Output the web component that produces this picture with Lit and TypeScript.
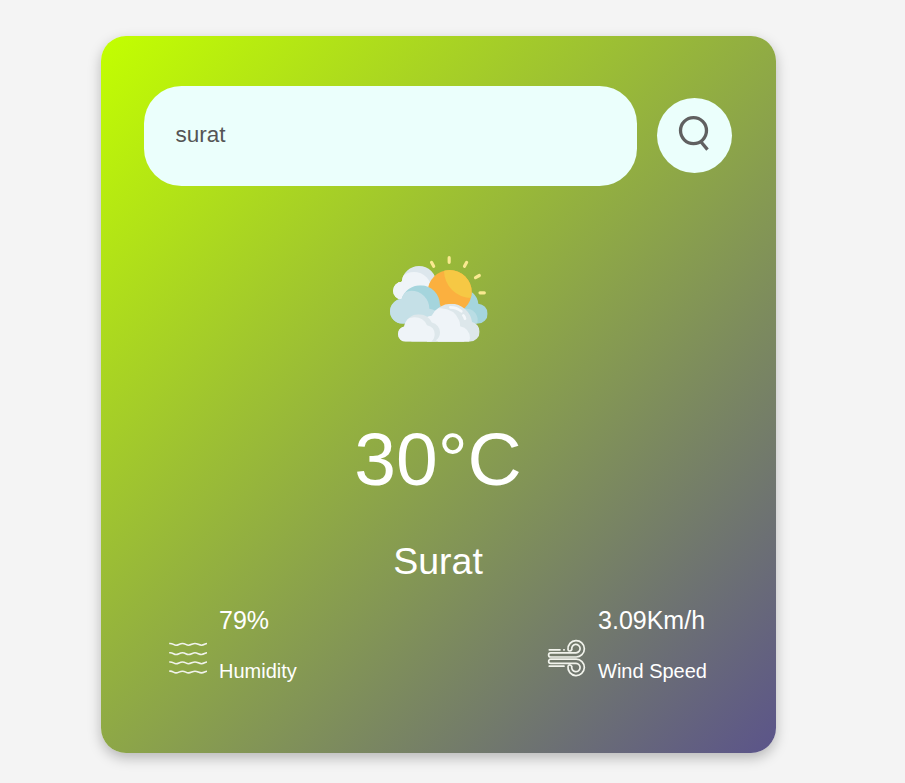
import { LitElement, html, css, svg } from "lit";
import { customElement, property } from "lit/decorators.js";

const cloudySun = svg`
  <defs>
    <clipPath id="sun"><circle cx="209" cy="141" r="66" /></clipPath>
    <clipPath id="back">
      <circle cx="117" cy="115" r="52" />
      <circle cx="66" cy="137" r="27" />
      <rect x="66" y="115" width="80" height="49" />
    </clipPath>
    <clipPath id="teal">
      <circle cx="121" cy="180" r="59" />
      <circle cx="67" cy="199" r="37" />
      <rect x="67" y="180" width="115" height="56" />
    </clipPath>
    <clipPath id="right">
      <circle cx="247" cy="180" r="48" />
      <circle cx="293" cy="206" r="30" />
      <rect x="240" y="185" width="53" height="51" />
    </clipPath>
    <clipPath id="front">
      <circle cx="213" cy="240" r="64" />
      <circle cx="269" cy="260" r="30" />
      <circle cx="158" cy="251" r="39" />
      <rect x="140" y="251" width="129" height="39" />
    </clipPath>
    <clipPath id="small">
      <circle cx="116" cy="252" r="44" />
      <circle cx="150" cy="262" r="30" />
      <circle cx="77" cy="267" r="23" />
      <rect x="77" y="265" width="92" height="25" />
    </clipPath>
    <clipPath id="base"><rect width="360" height="290" /></clipPath>
  </defs>
  <g stroke="#f9e990" stroke-width="9.500" stroke-linecap="round">
    <path d="M207.500 38V52M154.500 52L161 64M260 52L253.500 64M298 91.500L286.500 98M300 143.500H313" />
  </g>
  <g clip-path="url(#back)">
    <rect x="30" y="55" width="150" height="125" fill="#dde7ed" />
    <circle cx="102" cy="134" r="53" fill="#eff4f8" />
    <rect x="30" y="105" width="40" height="65" fill="#eff4f8" />
  </g>
  <g clip-path="url(#right)">
    <rect x="190" y="110" width="150" height="127" fill="#a5d5dd" />
    <circle cx="259" cy="225" r="34" fill="#b9dde4" />
  </g>
  <g clip-path="url(#sun)">
    <rect x="140" y="70" width="140" height="145" fill="#fbb03f" />
    <circle cx="275" cy="76" r="83" fill="#f6c844" />
  </g>
  <g clip-path="url(#teal)">
    <rect x="25" y="115" width="165" height="121" fill="#a5d5dd" />
    <path d="M20 236V155H58Q75 137 94 137A54 54 0 0 1 148 191Q169 193 180 210V236Z" fill="#c5e0e7" />
  </g>
  <g clip-path="url(#base)">
    <g clip-path="url(#front)">
      <rect x="115" y="170" width="190" height="125" fill="#dde7eb" />
      <path d="M110 295V190H182Q224 192 238 227Q241 237 240 244Q270 251 270 280L266 295Z" fill="#eff4f8" />
      <path d="M211 187Q230 187 244 199M250 211Q254 215 255 221" fill="none" stroke="#f4f8fb" stroke-width="8" stroke-linecap="round" />
    </g>
    <g clip-path="url(#small)">
      <rect x="50" y="195" width="135" height="95" fill="#dde7eb" />
      <path d="M50 290V226H76Q88 217 102 217A41 41 0 0 1 141 241Q164 246 164 268Q164 282 154 290Z" fill="#eff4f8" />
    </g>
  </g>`;

@customElement("weather-detail")
export class WeatherDetail extends LitElement {
  @property() kind = "humidity";
  @property() value = "";
  @property() label = "";

  static styles = css`
    :host { display: flex; align-items: center; gap: 11px; color: #fff; }
    .icon { width: 39px; height: 39px; margin-top: 28px; flex: none; fill: none; stroke: #f1f3ec; overflow: visible; }
    .value { font-size: 25px; line-height: 29px; }
    .label { font-size: 20px; line-height: 23px; margin-top: 25px; white-space: nowrap; }
  `;

  render() {
    const waves = [4.5, 13.8, 23, 32.2].map(
      (y) => svg`<path stroke-width="1.600" d="M.2 ${y}C4 ${y - 0.5} 4.500 ${y + 1.7} 7 ${y + 1.7}S10.500 ${y} 13.500 ${y}S17 ${y + 1.7} 19.500 ${y + 1.7}S23.500 ${y} 26 ${y}S30 ${y + 1.7} 32.500 ${y + 1.7}S36 ${y} 38 ${y}" />`
    );
    const wind = svg`
      <g stroke-width="1.700" stroke-linecap="round">
        <path d="M1.300 10.800H12M15.800 10.800H16.200M1.300 27.200H16" />
        <path d="M20 10.500A8.200 8.200 0 1 1 28 18H2.700A2 2 0 0 1 2.700 13.800H28A4.200 4.200 0 1 0 23.800 10.500Q23 12 21.700 12Q20.100 12 20 10.500" />
        <path d="M20 27.500A8.200 8.200 0 1 0 28 20.200H2.700A2 2 0 0 0 2.700 24.300H28A4.200 4.200 0 1 1 23.800 27.500Q23 26 21.700 26Q20.100 26 20 27.500" />
      </g>`;
    return html`
      <svg class="icon" viewBox="0 0 39 39">${this.kind === "wind" ? wind : waves}</svg>
      <div>
        <div class="value">${this.value}</div>
        <div class="label">${this.label}</div>
      </div>
    `;
  }
}

@customElement("app-root")
export class AppRoot extends LitElement {
  static styles = css`
    :host {
      display: block;
      box-sizing: border-box;
      height: 783px;
      padding: 36px 0 0 101px;
      background: #f4f4f4;
      font-family: "Liberation Sans", Arial, sans-serif;
      overflow: hidden;
    }
    .card {
      box-sizing: border-box;
      width: 675px;
      height: 717px;
      padding: 50px 44px 0 43px;
      border-radius: 25px;
      background: linear-gradient(135deg, #c3ff00, #5b548a);
      box-shadow: 0 5px 12.5px rgba(0, 0, 0, 0.25);
      color: #fff;
      text-align: center;
    }
    .search { display: flex; align-items: center; gap: 20px; }
    .field {
      box-sizing: border-box;
      flex: 1;
      min-width: 0;
      height: 100px;
      padding: 0 31px 2px 31.5px;
      border: 0;
      outline: 0;
      border-radius: 37.5px;
      background: #ebfffc;
      color: #555;
      font: 22.5px "Liberation Sans", Arial, sans-serif;
    }
    .button {
      width: 75px;
      height: 75px;
      margin-bottom: 2px;
      padding: 0;
      border: 0;
      border-radius: 50%;
      background: #ebfffc;
    }
    .glass { display: block; width: 75px; height: 75px; fill: none; stroke: #606060; }
    .sky { display: block; width: 120px; height: 105px; margin: 59px 0 0 236px; }
    .temp { font-size: 75px; line-height: 86px; margin-top: 66px; }
    .city { font-size: 37.5px; line-height: 43px; margin-top: 38px; }
    .details {
      display: flex;
      justify-content: space-between;
      margin-top: 23px;
      padding: 0 25px;
      text-align: left;
    }
  `;

  render() {
    return html`
      <main class="card">
        <div class="search">
          <input class="field" type="text" value="surat" spellcheck="false" aria-label="City" />
          <button class="button" aria-label="Search">
            <svg class="glass" viewBox="0 0 75 75">
              <circle cx="36.500" cy="32.600" r="13" stroke-width="3.300" />
              <path d="M43.500 43.300L50.500 51.600" stroke-width="3.300" />
            </svg>
          </button>
        </div>
        <svg class="sky" viewBox="0 0 360 315">${cloudySun}</svg>
        <div class="temp">30°C</div>
        <div class="city">Surat</div>
        <div class="details">
          <weather-detail kind="humidity" value="79%" label="Humidity"></weather-detail>
          <weather-detail kind="wind" value="3.09Km/h" label="Wind Speed"></weather-detail>
        </div>
      </main>
    `;
  }
}
